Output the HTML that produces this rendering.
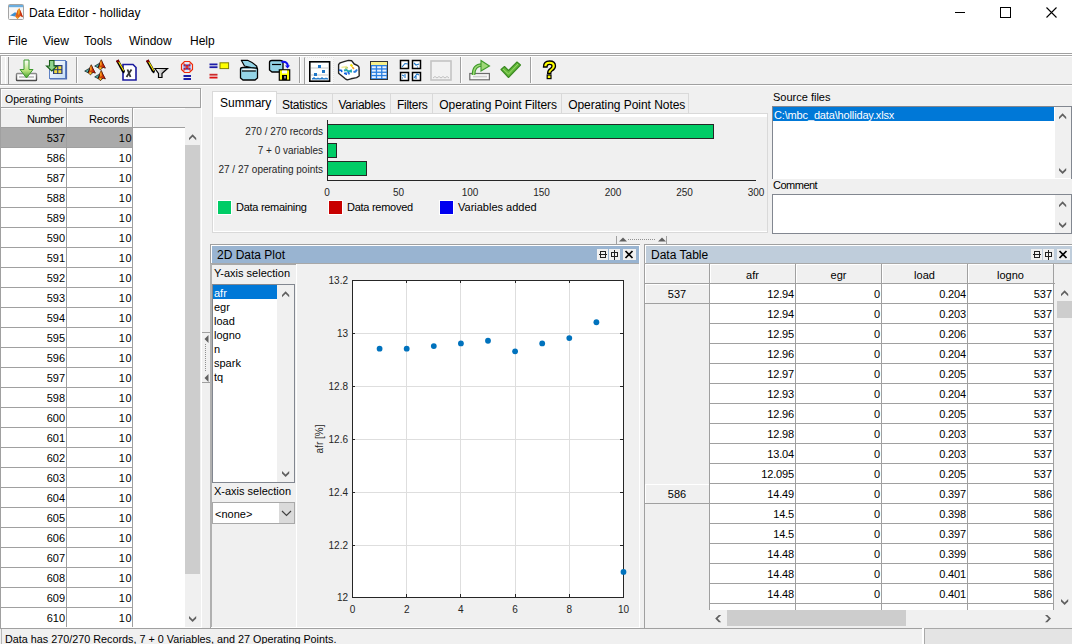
<!DOCTYPE html>
<html><head><meta charset="utf-8">
<style>
*{box-sizing:border-box;margin:0;padding:0}
html,body{width:1072px;height:644px;overflow:hidden;background:#f0f0f0;font-family:"Liberation Sans",sans-serif;color:#000}
.a{position:absolute}
.t{position:absolute;white-space:pre;line-height:1}
svg{position:absolute;overflow:visible}
</style></head><body>
<div class="a" style="left:0px;top:0px;width:1072px;height:53px;background:#fff;"></div>
<svg style="left:8px;top:4px" width="16" height="16" viewBox="0 0 16 16">
<rect x="0.5" y="0.5" width="15" height="15" rx="1" fill="#f6f6f6" stroke="#a4a4a4"/>
<rect x="1" y="1" width="14" height="2.2" fill="#6aaee0"/>
<path d="M2 11.5 L7 8.2 L9 9.2 L7.2 12.5 Z" fill="#3d8fd0"/>
<path d="M7.2 12.5 L9.5 6 L11.3 4.3 L13 8 L15 13.3 L12.6 12 L9.5 15 Z" fill="#e0641a"/>
<path d="M11.3 4.3 L13 8 L15 13.3 L12.6 12 L12 7 Z" fill="#c42a10"/>
<path d="M10.4 5.2 L11.3 4.3 L11.6 9 L10.3 11.2 Z" fill="#f2c22a"/>
<path d="M8 13 L9.5 15 L10.5 13.8 L9 12.5 Z" fill="#f0a020"/>
</svg>
<div class="t" style="left:29px;top:6.8px;font-size:12px;color:#000;">Data Editor - holliday</div>
<div class="a" style="left:955px;top:12px;width:10px;height:1px;background:#000;"></div>
<div class="a" style="left:1000px;top:7px;width:11px;height:11px;border:1px solid #000"></div>
<svg style="left:1046px;top:7px" width="11" height="11" viewBox="0 0 11 11"><path d="M0.5 0.5 L10.5 10.5 M10.5 0.5 L0.5 10.5" stroke="#000" stroke-width="1.1"/></svg>
<div class="t" style="left:8px;top:34.8px;font-size:12px;color:#000;">File</div>
<div class="t" style="left:43px;top:34.8px;font-size:12px;color:#000;">View</div>
<div class="t" style="left:84px;top:34.8px;font-size:12px;color:#000;">Tools</div>
<div class="t" style="left:129px;top:34.8px;font-size:12px;color:#000;">Window</div>
<div class="t" style="left:190px;top:34.8px;font-size:12px;color:#000;">Help</div>
<div class="a" style="left:0px;top:53px;width:1072px;height:1px;background:#a0a0a0;"></div>
<div class="a" style="left:0px;top:54px;width:1072px;height:1px;background:#fff;"></div>
<div class="a" style="left:0px;top:55px;width:1072px;height:1px;background:#a8a8a8;"></div>
<div class="a" style="left:0px;top:56px;width:1072px;height:28px;background:#f0f0f0;"></div>
<div class="a" style="left:1px;top:56px;width:1071px;height:1px;background:#fff;"></div>
<div class="a" style="left:0px;top:55px;width:1px;height:30px;background:#a8a8a8;"></div>
<div class="a" style="left:1px;top:56px;width:1px;height:28px;background:#fff;"></div>
<div class="a" style="left:5px;top:57px;width:1px;height:27px;background:#fff;"></div>
<div class="a" style="left:8px;top:57px;width:1px;height:27px;background:#999;"></div>
<div class="a" style="left:0px;top:84px;width:1072px;height:1px;background:#a0a0a0;"></div>
<div class="a" style="left:0px;top:85px;width:1072px;height:1px;background:#fff;"></div>
<div class="a" style="left:0px;top:86px;width:1072px;height:2px;background:#f0f0f0;"></div>
<div class="a" style="left:76px;top:57px;width:1px;height:26px;background:#a0a0a0;"></div>
<div class="a" style="left:77px;top:57px;width:1px;height:26px;background:#fff;"></div>
<div class="a" style="left:299px;top:57px;width:1px;height:26px;background:#a0a0a0;"></div>
<div class="a" style="left:300px;top:57px;width:1px;height:26px;background:#fff;"></div>
<div class="a" style="left:460px;top:57px;width:1px;height:26px;background:#a0a0a0;"></div>
<div class="a" style="left:461px;top:57px;width:1px;height:26px;background:#fff;"></div>
<div class="a" style="left:530px;top:57px;width:1px;height:26px;background:#a0a0a0;"></div>
<div class="a" style="left:531px;top:57px;width:1px;height:26px;background:#fff;"></div>
<div class="a" style="left:304px;top:57px;width:30px;height:27px;background:#f7f7f7;border-left:1px solid #a0a0a0;border-top:1px dotted #e4e4e4;border-right:1px dotted #e4e4e4"></div>
<svg style="left:0;top:0" width="600" height="90" viewBox="0 0 600 90"><defs>
<linearGradient id="gArrow" x1="0" y1="0" x2="0" y2="1"><stop offset="0" stop-color="#ffffff"/><stop offset="0.6" stop-color="#b7e27a"/><stop offset="1" stop-color="#3f9c2a"/></linearGradient>
<linearGradient id="gTray" x1="0" y1="0" x2="0" y2="1"><stop offset="0" stop-color="#8c8c8c"/><stop offset="1" stop-color="#4a4a4a"/></linearGradient>
<linearGradient id="gBlue" x1="0" y1="0" x2="1" y2="1"><stop offset="0" stop-color="#ffffff"/><stop offset="1" stop-color="#c6def5"/></linearGradient>
<linearGradient id="gFun" x1="0" y1="0" x2="1" y2="0"><stop offset="0" stop-color="#ffffff"/><stop offset="1" stop-color="#9a9a9a"/></linearGradient>
</defs><rect x="16.5" y="73.5" width="20" height="7" rx="0.8" fill="#fdfdfd" stroke="url(#gTray)" stroke-width="1.4"/><rect x="19" y="76" width="15" height="2" fill="#c8c8c8"/><path d="M24 60 H29 V69.5 H33 L26.5 78 L20 69.5 H24 Z" fill="url(#gArrow)" stroke="#3d9a2d" stroke-width="1"/><rect x="49.5" y="60.5" width="16" height="18" fill="url(#gBlue)" stroke="#5f82c4" stroke-width="1"/><path d="M50 79 H66.5 V61" fill="none" stroke="#4a6ab0" stroke-width="1.2"/><rect x="53" y="65" width="9.5" height="9" fill="#24397a"/><rect x="54.2" y="66.2" width="3" height="3" fill="#f3dc3c"/><rect x="58.3" y="66.2" width="3" height="3" fill="#f3dc3c"/><rect x="54.2" y="70.2" width="3" height="3" fill="#f3dc3c"/><rect x="58.3" y="70.2" width="3" height="3" fill="#f3dc3c"/><path d="M49.5 60.5 H54 V66 H57 L51.8 71 L46.5 66 H49.5 Z" fill="#8fd38f" stroke="#195e19" stroke-width="1.1"/><g transform="translate(84.5,64.5) scale(1.0)">
<path d="M0.2 6.6 L4.2 4.2 L5.6 5.2 L3.6 8.2 Z" fill="#4fb0ac" stroke="#1d2f2f" stroke-width="0.8"/>
<path d="M3.6 8.2 L5.4 3 L6.8 0.3 L8.2 3.6 L10.8 8.6 L8.6 7.8 L6 10.2 Z" fill="#c8420a" stroke="#1e0a04" stroke-width="0.9"/>
<path d="M6.8 0.3 L8.2 3.6 L10.8 8.6 L8.6 7.8 L7.8 3.5 Z" fill="#b81808"/>
<path d="M6.2 1.2 L6.8 0.6 L7.2 5 L6.2 7 L5.4 4 Z" fill="#ff9a18"/>
<path d="M4 8.4 L6 10 L7.4 8.6 L5.8 7.6 Z" fill="#f4c21a"/>
</g><g transform="translate(94.5,59.5) scale(1.0)">
<path d="M0.2 6.6 L4.2 4.2 L5.6 5.2 L3.6 8.2 Z" fill="#4fb0ac" stroke="#1d2f2f" stroke-width="0.8"/>
<path d="M3.6 8.2 L5.4 3 L6.8 0.3 L8.2 3.6 L10.8 8.6 L8.6 7.8 L6 10.2 Z" fill="#c8420a" stroke="#1e0a04" stroke-width="0.9"/>
<path d="M6.8 0.3 L8.2 3.6 L10.8 8.6 L8.6 7.8 L7.8 3.5 Z" fill="#b81808"/>
<path d="M6.2 1.2 L6.8 0.6 L7.2 5 L6.2 7 L5.4 4 Z" fill="#ff9a18"/>
<path d="M4 8.4 L6 10 L7.4 8.6 L5.8 7.6 Z" fill="#f4c21a"/>
</g><g transform="translate(94.5,70.3) scale(1.0)">
<path d="M0.2 6.6 L4.2 4.2 L5.6 5.2 L3.6 8.2 Z" fill="#4fb0ac" stroke="#1d2f2f" stroke-width="0.8"/>
<path d="M3.6 8.2 L5.4 3 L6.8 0.3 L8.2 3.6 L10.8 8.6 L8.6 7.8 L6 10.2 Z" fill="#c8420a" stroke="#1e0a04" stroke-width="0.9"/>
<path d="M6.8 0.3 L8.2 3.6 L10.8 8.6 L8.6 7.8 L7.8 3.5 Z" fill="#b81808"/>
<path d="M6.2 1.2 L6.8 0.6 L7.2 5 L6.2 7 L5.4 4 Z" fill="#ff9a18"/>
<path d="M4 8.4 L6 10 L7.4 8.6 L5.8 7.6 Z" fill="#f4c21a"/>
</g><path d="M123 64.5 H133 L136 67.5 V80 H123 Z" fill="#fff" stroke="#1b1b9e" stroke-width="1.6"/><path d="M126.5 77 L131.5 69.5 M127.5 69.5 L130.5 77" stroke="#333" stroke-width="1.8"/><g transform="translate(115.5,59.5)">
<path d="M0.5 1.5 L3 0 L9.5 11.5 L8.5 14 L6.5 12.5 Z" fill="#000"/>
<path d="M2.6 2.6 L7.8 11.6 L8.6 10.8 L3.6 2 Z" fill="#ffee00"/>
<path d="M0.5 1.5 L3 0 L4 2 L1.6 3.3 Z" fill="#8a0000"/>
</g><path d="M155 68.5 H167.5 L162 73.5 V77.5 H158.5 V73.5 Z" fill="url(#gFun)" stroke="#000" stroke-width="1.2"/><g transform="translate(145.5,59.5)">
<path d="M0.5 1.5 L3 0 L9.5 11.5 L8.5 14 L6.5 12.5 Z" fill="#000"/>
<path d="M2.6 2.6 L7.8 11.6 L8.6 10.8 L3.6 2 Z" fill="#ffee00"/>
<path d="M0.5 1.5 L3 0 L4 2 L1.6 3.3 Z" fill="#8a0000"/>
</g><path d="M184.5 61.5 H189.5 L192.5 64.5 V69.5 L189.5 72.5 H184.5 L181.5 69.5 V64.5 Z" fill="#e9e9f2" stroke="#ee2a0a" stroke-width="1.2"/><rect x="183.5" y="64.5" width="7" height="2" fill="#2a2ab8"/><rect x="183.5" y="67.6" width="7" height="2" fill="#2a2ab8"/><path d="M183.5 63.5 L190.5 70.5 M190.5 63.5 L183.5 70.5" stroke="#e83020" stroke-width="1.1"/><rect x="183.5" y="75" width="7.5" height="2" fill="#1d1da8"/><rect x="183.5" y="78" width="7.5" height="2" fill="#1d1da8"/><rect x="209.5" y="63.5" width="8" height="1.8" fill="#1d1da8"/><rect x="209.5" y="66.3" width="8" height="1.8" fill="#1d1da8"/><rect x="220" y="62.8" width="8.6" height="5.8" fill="#ffff00" stroke="#808000" stroke-width="1"/><rect x="209.5" y="73.8" width="8" height="1.8" fill="#cc2a2a"/><rect x="209.5" y="76.7" width="8" height="1.8" fill="#dd1010"/><path d="M240.5 69 Q240.5 67.5 243 67.5 H255 Q257.5 67.5 257.5 69 V78 L255 80 H243 L240.5 78 Z" fill="#94d4e6" stroke="#000" stroke-width="1.3"/><path d="M242.5 68.8 H255.5 V70.4 H242.5 Z" fill="#f4f4f4"/><path d="M242 71 H256" stroke="#000" stroke-width="1.2"/><path d="M241.3 60.3 H247.5 Q252 62 256.8 66.2 V68.2 L251 67.5 L244.5 66 Z" fill="#94d4e6" stroke="#000" stroke-width="1.2" stroke-linejoin="round"/><path d="M269.5 62.5 Q269.5 60.5 272 60.5 H280 Q283 60.5 283 62.5 V70 L280.5 72 H272 L269.5 70 Z" fill="#94d4e6" stroke="#000" stroke-width="1.3"/><path d="M272 64.5 H281" stroke="#000" stroke-width="1.2"/><path d="M281.5 62 Q287 61 288 66" fill="none" stroke="#1010f0" stroke-width="2"/><path d="M285 65.5 L290 65.5 L287.5 68.5 Z" fill="#1010f0"/><rect x="279.3" y="69.8" width="10.4" height="10.4" fill="#ffff00" stroke="#000" stroke-width="1.2"/><rect x="282" y="70.5" width="5" height="3" fill="#fff"/><rect x="282" y="75" width="5" height="5" fill="#000"/><rect x="284.5" y="76" width="1" height="2.5" fill="#fff"/><rect x="309.8" y="61.8" width="19.8" height="19.4" fill="#fff" stroke="#000" stroke-width="1.6"/><rect x="311" y="67.5" width="17.5" height="1" fill="#c8c8c8"/><rect x="311" y="74.5" width="17.5" height="1" fill="#c8c8c8"/><rect x="318" y="65" width="3" height="3" fill="#1f77c8"/><rect x="322" y="70" width="3" height="3" fill="#1f77c8"/><rect x="314" y="73" width="3" height="3" fill="#1f77c8"/><path d="M312 79 L314 77.5 L316 79 L318 78 L320 79 L322 77.5 L324 79 L326 78 L328 79 Z" fill="#1f77c8" stroke="#1f77c8" stroke-width="0.8"/><path d="M338.6 64.5 L340.2 62.8 L344 61.6 L348.5 60.4 L351.8 60.8 L354.2 64 L357.8 65.6 L359 67.2 L359.2 76 L356.6 77.6 L351 78.8 L347.3 79.9 L345.3 78.8 L342 76 L338.6 73.2 Z" fill="#fff" stroke="#222" stroke-width="1.4" stroke-linejoin="bevel"/><path d="M341.5 67.5 L347 66.5" stroke="#f0ec9a" stroke-width="1.6"/><path d="M350.5 64.5 L352.5 66.5" stroke="#f5e000" stroke-width="2"/><path d="M352.3 67.2 L354 68.8" stroke="#f5a020" stroke-width="1.6"/><path d="M345 68.5 L348 67.5" stroke="#b8d070" stroke-width="1.4"/><path d="M339 70 L341.5 70.5 L341.8 72.2" fill="none" stroke="#1060e0" stroke-width="1.6"/><path d="M344 70.5 L346.5 70 L348.5 71.5 L351 70.5 L351.2 72.5" fill="none" stroke="#20a8b0" stroke-width="1.8"/><path d="M353.5 72 L355.5 71.5 L357 69.5" fill="none" stroke="#2f7fe0" stroke-width="2"/><path d="M344 73.5 L346 73.2 L346.3 75 M347.5 72.5 L349 73 L349 74.5" fill="none" stroke="#1060e0" stroke-width="1.5"/><rect x="370.5" y="61.5" width="17" height="18" fill="#2a7fe0" stroke="#333" stroke-width="1"/><rect x="371" y="62" width="16" height="3" fill="#f8f08a"/><rect x="371.8" y="66.3" width="4" height="2" fill="#e8f2ff"/><rect x="377.1" y="66.3" width="4" height="2" fill="#e8f2ff"/><rect x="382.40000000000003" y="66.3" width="4" height="2" fill="#e8f2ff"/><rect x="371.8" y="69.6" width="4" height="2" fill="#e8f2ff"/><rect x="377.1" y="69.6" width="4" height="2" fill="#e8f2ff"/><rect x="382.40000000000003" y="69.6" width="4" height="2" fill="#e8f2ff"/><rect x="371.8" y="72.89999999999999" width="4" height="2" fill="#e8f2ff"/><rect x="377.1" y="72.89999999999999" width="4" height="2" fill="#e8f2ff"/><rect x="382.40000000000003" y="72.89999999999999" width="4" height="2" fill="#e8f2ff"/><rect x="371.8" y="76.19999999999999" width="4" height="2" fill="#e8f2ff"/><rect x="377.1" y="76.19999999999999" width="4" height="2" fill="#e8f2ff"/><rect x="382.40000000000003" y="76.19999999999999" width="4" height="2" fill="#e8f2ff"/><rect x="400.5" y="60.5" width="8" height="8" fill="#fff" stroke="#000" stroke-width="1.5"/><rect x="412.5" y="60.5" width="8" height="8" fill="#fff" stroke="#000" stroke-width="1.5"/><rect x="400.5" y="72.5" width="8" height="8" fill="#fff" stroke="#000" stroke-width="1.5"/><rect x="412.5" y="72.5" width="8" height="8" fill="#fff" stroke="#000" stroke-width="1.5"/><path d="M402 67 L405 63.5 L408 64" fill="none" stroke="#1f77c8" stroke-width="1.1"/><path d="M414 63 L416 65 L419 64 M417 67 L418 67" fill="none" stroke="#1f77c8" stroke-width="1.1"/><path d="M402 75 L404 76 M405 74 L405 78 M402 78 L403 78" fill="none" stroke="#1f77c8" stroke-width="1.1"/><path d="M414 78 L417 74 L419 75 M416 76 L416 79" fill="none" stroke="#1f77c8" stroke-width="1.1"/><rect x="431" y="61" width="20" height="19" fill="#f2f2f2" stroke="#c4c4c4" stroke-width="1.6"/><path d="M433 78 L435 76.5 L437 78 L439 76.5 L441 78 L443 76.5 L445 78 L447 76.5 L449 78" fill="none" stroke="#b4b4b4" stroke-width="0.8"/><rect x="469.8" y="73.5" width="19.6" height="6.3" fill="#f8f8f8" stroke="#6c6c6c" stroke-width="1.2"/><rect x="473" y="75.8" width="14" height="1.6" fill="#cfcfcf"/><path d="M473.5 75 Q473.5 65 482 65" fill="none" stroke="#3e9a2a" stroke-width="3.6"/><path d="M473.5 75 Q473.5 65 482 65" fill="none" stroke="#9fd878" stroke-width="1.6"/><path d="M481 60.5 L489.5 66 L481 71 Z" fill="#9fd878" stroke="#3e9a2a" stroke-width="1.1"/><path d="M501 69.5 L504.5 66.5 L508.5 70.5 L517 62 L520.5 65 L508.5 77.5 Z" fill="#63b83a" stroke="#3b8a22" stroke-width="1.1" stroke-linejoin="round"/><path d="M503 69 L508.5 74 L518 64" fill="none" stroke="#9ad86a" stroke-width="1"/><path d="M543.5 67 Q543.5 61 549.5 61 Q555.5 61 555.5 66 Q555.5 69 552 71 Q550.8 71.8 550.8 73.5 H547.6 Q547.6 70.2 550.2 68.6 Q552 67.5 552 66 Q552 64.3 549.5 64.3 Q547 64.3 547 67 Z" fill="#ffff00" stroke="#000" stroke-width="1.3"/><rect x="547.2" y="75" width="3.8" height="3.6" fill="#ffff00" stroke="#000" stroke-width="1.2"/></svg>
<div class="a" style="left:0px;top:88px;width:201px;height:1px;background:#a0a0a0;"></div>
<div class="a" style="left:0px;top:88px;width:1px;height:540px;background:#a0a0a0;"></div>
<div class="a" style="left:1px;top:89px;width:199px;height:1px;background:#fff;"></div>
<div class="a" style="left:1px;top:89px;width:1px;height:18px;background:#fff;"></div>
<div class="a" style="left:200px;top:88px;width:1px;height:20px;background:#a0a0a0;"></div>
<div class="a" style="left:1px;top:107px;width:200px;height:1px;background:#a0a0a0;"></div>
<div class="t" style="left:5px;top:94.1px;font-size:10.5px;color:#000;">Operating Points</div>
<div class="a" style="left:1px;top:108px;width:184px;height:1px;background:#fff;"></div>
<div class="a" style="left:66px;top:108px;width:1px;height:20px;background:#a0a0a0;"></div>
<div class="a" style="left:67px;top:109px;width:1px;height:18px;background:#fff;"></div>
<div class="a" style="left:132px;top:108px;width:1px;height:20px;background:#a0a0a0;"></div>
<div class="a" style="left:133px;top:109px;width:1px;height:18px;background:#fff;"></div>
<div class="a" style="left:1px;top:127px;width:184px;height:1px;background:#a0a0a0;"></div>
<div class="t" style="right:1008.6px;top:113.7px;font-size:11px;color:#000;letter-spacing:-0.45px">Number</div>
<div class="t" style="right:943px;top:113.7px;font-size:11px;color:#000;letter-spacing:-0.15px">Records</div>
<div class="a" style="left:1px;top:128px;width:132px;height:499px;background:#fff;"></div>
<div class="a" style="left:133px;top:128px;width:52px;height:499px;background:#fff;"></div>
<div class="a" style="left:1px;top:128px;width:132px;height:19px;background:#aaaaaa;"></div>
<div class="a" style="left:1px;top:147px;width:132px;height:1px;background:#a0a0a0;"></div>
<div class="t" style="right:1007px;top:132.7px;font-size:11px;color:#000;">537</div>
<div class="t" style="right:939.8px;top:132.7px;font-size:11px;color:#000;letter-spacing:0.6px">10</div>
<div class="a" style="left:1px;top:167px;width:132px;height:1px;background:#a0a0a0;"></div>
<div class="t" style="right:1007px;top:152.7px;font-size:11px;color:#000;">586</div>
<div class="t" style="right:939.8px;top:152.7px;font-size:11px;color:#000;letter-spacing:0.6px">10</div>
<div class="a" style="left:1px;top:187px;width:132px;height:1px;background:#a0a0a0;"></div>
<div class="t" style="right:1007px;top:172.7px;font-size:11px;color:#000;">587</div>
<div class="t" style="right:939.8px;top:172.7px;font-size:11px;color:#000;letter-spacing:0.6px">10</div>
<div class="a" style="left:1px;top:207px;width:132px;height:1px;background:#a0a0a0;"></div>
<div class="t" style="right:1007px;top:192.7px;font-size:11px;color:#000;">588</div>
<div class="t" style="right:939.8px;top:192.7px;font-size:11px;color:#000;letter-spacing:0.6px">10</div>
<div class="a" style="left:1px;top:227px;width:132px;height:1px;background:#a0a0a0;"></div>
<div class="t" style="right:1007px;top:212.7px;font-size:11px;color:#000;">589</div>
<div class="t" style="right:939.8px;top:212.7px;font-size:11px;color:#000;letter-spacing:0.6px">10</div>
<div class="a" style="left:1px;top:247px;width:132px;height:1px;background:#a0a0a0;"></div>
<div class="t" style="right:1007px;top:232.7px;font-size:11px;color:#000;">590</div>
<div class="t" style="right:939.8px;top:232.7px;font-size:11px;color:#000;letter-spacing:0.6px">10</div>
<div class="a" style="left:1px;top:267px;width:132px;height:1px;background:#a0a0a0;"></div>
<div class="t" style="right:1007px;top:252.7px;font-size:11px;color:#000;">591</div>
<div class="t" style="right:939.8px;top:252.7px;font-size:11px;color:#000;letter-spacing:0.6px">10</div>
<div class="a" style="left:1px;top:287px;width:132px;height:1px;background:#a0a0a0;"></div>
<div class="t" style="right:1007px;top:272.7px;font-size:11px;color:#000;">592</div>
<div class="t" style="right:939.8px;top:272.7px;font-size:11px;color:#000;letter-spacing:0.6px">10</div>
<div class="a" style="left:1px;top:307px;width:132px;height:1px;background:#a0a0a0;"></div>
<div class="t" style="right:1007px;top:292.7px;font-size:11px;color:#000;">593</div>
<div class="t" style="right:939.8px;top:292.7px;font-size:11px;color:#000;letter-spacing:0.6px">10</div>
<div class="a" style="left:1px;top:327px;width:132px;height:1px;background:#a0a0a0;"></div>
<div class="t" style="right:1007px;top:312.7px;font-size:11px;color:#000;">594</div>
<div class="t" style="right:939.8px;top:312.7px;font-size:11px;color:#000;letter-spacing:0.6px">10</div>
<div class="a" style="left:1px;top:347px;width:132px;height:1px;background:#a0a0a0;"></div>
<div class="t" style="right:1007px;top:332.7px;font-size:11px;color:#000;">595</div>
<div class="t" style="right:939.8px;top:332.7px;font-size:11px;color:#000;letter-spacing:0.6px">10</div>
<div class="a" style="left:1px;top:367px;width:132px;height:1px;background:#a0a0a0;"></div>
<div class="t" style="right:1007px;top:352.7px;font-size:11px;color:#000;">596</div>
<div class="t" style="right:939.8px;top:352.7px;font-size:11px;color:#000;letter-spacing:0.6px">10</div>
<div class="a" style="left:1px;top:387px;width:132px;height:1px;background:#a0a0a0;"></div>
<div class="t" style="right:1007px;top:372.7px;font-size:11px;color:#000;">597</div>
<div class="t" style="right:939.8px;top:372.7px;font-size:11px;color:#000;letter-spacing:0.6px">10</div>
<div class="a" style="left:1px;top:407px;width:132px;height:1px;background:#a0a0a0;"></div>
<div class="t" style="right:1007px;top:392.7px;font-size:11px;color:#000;">598</div>
<div class="t" style="right:939.8px;top:392.7px;font-size:11px;color:#000;letter-spacing:0.6px">10</div>
<div class="a" style="left:1px;top:427px;width:132px;height:1px;background:#a0a0a0;"></div>
<div class="t" style="right:1007px;top:412.7px;font-size:11px;color:#000;">600</div>
<div class="t" style="right:939.8px;top:412.7px;font-size:11px;color:#000;letter-spacing:0.6px">10</div>
<div class="a" style="left:1px;top:447px;width:132px;height:1px;background:#a0a0a0;"></div>
<div class="t" style="right:1007px;top:432.7px;font-size:11px;color:#000;">601</div>
<div class="t" style="right:939.8px;top:432.7px;font-size:11px;color:#000;letter-spacing:0.6px">10</div>
<div class="a" style="left:1px;top:467px;width:132px;height:1px;background:#a0a0a0;"></div>
<div class="t" style="right:1007px;top:452.7px;font-size:11px;color:#000;">602</div>
<div class="t" style="right:939.8px;top:452.7px;font-size:11px;color:#000;letter-spacing:0.6px">10</div>
<div class="a" style="left:1px;top:487px;width:132px;height:1px;background:#a0a0a0;"></div>
<div class="t" style="right:1007px;top:472.7px;font-size:11px;color:#000;">603</div>
<div class="t" style="right:939.8px;top:472.7px;font-size:11px;color:#000;letter-spacing:0.6px">10</div>
<div class="a" style="left:1px;top:507px;width:132px;height:1px;background:#a0a0a0;"></div>
<div class="t" style="right:1007px;top:492.7px;font-size:11px;color:#000;">604</div>
<div class="t" style="right:939.8px;top:492.7px;font-size:11px;color:#000;letter-spacing:0.6px">10</div>
<div class="a" style="left:1px;top:527px;width:132px;height:1px;background:#a0a0a0;"></div>
<div class="t" style="right:1007px;top:512.7px;font-size:11px;color:#000;">605</div>
<div class="t" style="right:939.8px;top:512.7px;font-size:11px;color:#000;letter-spacing:0.6px">10</div>
<div class="a" style="left:1px;top:547px;width:132px;height:1px;background:#a0a0a0;"></div>
<div class="t" style="right:1007px;top:532.7px;font-size:11px;color:#000;">606</div>
<div class="t" style="right:939.8px;top:532.7px;font-size:11px;color:#000;letter-spacing:0.6px">10</div>
<div class="a" style="left:1px;top:567px;width:132px;height:1px;background:#a0a0a0;"></div>
<div class="t" style="right:1007px;top:552.7px;font-size:11px;color:#000;">607</div>
<div class="t" style="right:939.8px;top:552.7px;font-size:11px;color:#000;letter-spacing:0.6px">10</div>
<div class="a" style="left:1px;top:587px;width:132px;height:1px;background:#a0a0a0;"></div>
<div class="t" style="right:1007px;top:572.7px;font-size:11px;color:#000;">608</div>
<div class="t" style="right:939.8px;top:572.7px;font-size:11px;color:#000;letter-spacing:0.6px">10</div>
<div class="a" style="left:1px;top:607px;width:132px;height:1px;background:#a0a0a0;"></div>
<div class="t" style="right:1007px;top:592.7px;font-size:11px;color:#000;">609</div>
<div class="t" style="right:939.8px;top:592.7px;font-size:11px;color:#000;letter-spacing:0.6px">10</div>
<div class="a" style="left:1px;top:627px;width:132px;height:1px;background:#a0a0a0;"></div>
<div class="t" style="right:1007px;top:612.7px;font-size:11px;color:#000;">610</div>
<div class="t" style="right:939.8px;top:612.7px;font-size:11px;color:#000;letter-spacing:0.6px">10</div>
<div class="a" style="left:66px;top:128px;width:1px;height:499px;background:#a0a0a0;"></div>
<div class="a" style="left:132px;top:128px;width:1px;height:499px;background:#a0a0a0;"></div>
<div class="a" style="left:185px;top:128px;width:15px;height:499px;background:#f0f0f0;"></div>
<div class="a" style="left:185px;top:145px;width:15px;height:429px;background:#cdcdcd;"></div>
<svg style="left:188.8px;top:133.7px" width="8" height="7" viewBox="0 0 8 7"><path d="M0 3.9 L3.6 0.3 L7.2 3.9 L7.2 6.3 L3.6 2.7 L0 6.3 Z" fill="#606060"/></svg>
<svg style="left:188.8px;top:615.9px" width="8" height="7" viewBox="0 0 8 7"><path d="M0 0 L3.6 3.6 L7.2 0 L7.2 2.4 L3.6 6 L0 2.4 Z" fill="#606060"/></svg>
<div class="a" style="left:1px;top:627px;width:200px;height:1px;background:#fff;"></div>
<div class="a" style="left:201px;top:89px;width:1px;height:539px;background:#fff;"></div>
<div class="a" style="left:212px;top:113px;width:556px;height:120px;background:#fff;"></div>
<div class="a" style="left:212px;top:113px;width:556px;height:120px;border:1px solid #d9d9d9"></div>
<div class="a" style="left:214px;top:117px;width:553px;height:114px;background:#f0f0f0;"></div>
<div class="a" style="left:276px;top:93px;width:57px;height:20px;background:#f0f0f0;border:1px solid #d9d9d9;border-bottom:none"></div>
<div class="t" style="left:282px;top:98.8px;font-size:12px;color:#000;letter-spacing:-0.27px">Statistics</div>
<div class="a" style="left:332px;top:93px;width:59px;height:20px;background:#f0f0f0;border:1px solid #d9d9d9;border-bottom:none"></div>
<div class="t" style="left:338.5px;top:98.8px;font-size:12px;color:#000;letter-spacing:-0.26px">Variables</div>
<div class="a" style="left:390px;top:93px;width:43px;height:20px;background:#f0f0f0;border:1px solid #d9d9d9;border-bottom:none"></div>
<div class="t" style="left:397px;top:98.8px;font-size:12px;color:#000;letter-spacing:-0.3px">Filters</div>
<div class="a" style="left:432px;top:93px;width:130px;height:20px;background:#f0f0f0;border:1px solid #d9d9d9;border-bottom:none"></div>
<div class="t" style="left:439.3px;top:98.8px;font-size:12px;color:#000;letter-spacing:-0.08px">Operating Point Filters</div>
<div class="a" style="left:561px;top:93px;width:128px;height:20px;background:#f0f0f0;border:1px solid #d9d9d9;border-bottom:none"></div>
<div class="t" style="left:568.2px;top:98.8px;font-size:12px;color:#000;letter-spacing:-0.045px">Operating Point Notes</div>
<div class="a" style="left:212px;top:91px;width:65px;height:23px;background:#fff;border:1px solid #d9d9d9;border-bottom:none"></div>
<div class="a" style="left:213px;top:113px;width:63px;height:4px;background:#fff;"></div>
<div class="t" style="left:220px;top:96.8px;font-size:12px;color:#000;">Summary</div>
<div class="a" style="left:327px;top:120px;width:1px;height:61px;background:#262626;"></div>
<div class="a" style="left:327px;top:180px;width:429px;height:1px;background:#262626;"></div>
<div class="a" style="left:327px;top:124px;width:387px;height:15px;background:#00cc66;border:1px solid #262626"></div>
<div class="a" style="left:327px;top:143px;width:10px;height:15px;background:#00cc66;border:1px solid #262626"></div>
<div class="a" style="left:327px;top:161px;width:40px;height:15px;background:#00cc66;border:1px solid #262626"></div>
<div class="t" style="right:749px;top:126.5px;font-size:10px;color:#262626;">270 / 270 records</div>
<div class="t" style="right:749px;top:145.5px;font-size:10px;color:#262626;">7 + 0 variables</div>
<div class="t" style="right:749px;top:164.5px;font-size:10px;color:#262626;">27 / 27 operating points</div>
<div class="t" style="left:227.0px;width:200px;text-align:center;top:187.5px;font-size:10px;color:#262626;">0</div>
<div class="t" style="left:298.5px;width:200px;text-align:center;top:187.5px;font-size:10px;color:#262626;">50</div>
<div class="t" style="left:370.0px;width:200px;text-align:center;top:187.5px;font-size:10px;color:#262626;">100</div>
<div class="t" style="left:441.5px;width:200px;text-align:center;top:187.5px;font-size:10px;color:#262626;">150</div>
<div class="t" style="left:513.0px;width:200px;text-align:center;top:187.5px;font-size:10px;color:#262626;">200</div>
<div class="t" style="left:584.5px;width:200px;text-align:center;top:187.5px;font-size:10px;color:#262626;">250</div>
<div class="t" style="left:656.0px;width:200px;text-align:center;top:187.5px;font-size:10px;color:#262626;">300</div>
<div class="a" style="left:217px;top:200px;width:15px;height:15px;background:#fff;"></div>
<div class="a" style="left:218px;top:201px;width:13px;height:13px;background:#00cc66;"></div>
<div class="t" style="left:236px;top:201.7px;font-size:11px;color:#000;letter-spacing:-0.28px">Data remaining</div>
<div class="a" style="left:328px;top:200px;width:15px;height:15px;background:#fff;"></div>
<div class="a" style="left:329px;top:201px;width:13px;height:13px;background:#c80000;"></div>
<div class="t" style="left:347px;top:201.7px;font-size:11px;color:#000;letter-spacing:-0.27px">Data removed</div>
<div class="a" style="left:439px;top:200px;width:15px;height:15px;background:#fff;"></div>
<div class="a" style="left:440px;top:201px;width:13px;height:13px;background:#0000f0;"></div>
<div class="t" style="left:458px;top:201.7px;font-size:11px;color:#000;letter-spacing:0px">Variables added</div>
<div class="t" style="left:773px;top:91.7px;font-size:11px;color:#000;">Source files</div>
<div class="a" style="left:772px;top:106px;width:300px;height:73px;background:#fff;border:1px solid #828790;border-bottom:none"></div>
<div class="a" style="left:773px;top:107px;width:281px;height:14px;background:#0078d7;"></div>
<div class="t" style="left:774px;top:109.7px;font-size:11px;color:#fff;letter-spacing:-0.15px">C:\mbc_data\holliday.xlsx</div>
<div class="a" style="left:1055px;top:107px;width:16px;height:71px;background:#f0f0f0;"></div>
<svg style="left:1058.8px;top:113px" width="8" height="7" viewBox="0 0 8 7"><path d="M0 3.9 L3.6 0.3 L7.2 3.9 L7.2 6.3 L3.6 2.7 L0 6.3 Z" fill="#606060"/></svg>
<svg style="left:1058.8px;top:167.6px" width="8" height="7" viewBox="0 0 8 7"><path d="M0 0 L3.6 3.6 L7.2 0 L7.2 2.4 L3.6 6 L0 2.4 Z" fill="#606060"/></svg>
<div class="t" style="left:773px;top:179.7px;font-size:11px;color:#000;letter-spacing:-0.5px">Comment</div>
<div class="a" style="left:772px;top:194px;width:300px;height:40px;background:#fff;border:1px solid #828790"></div>
<div class="a" style="left:1055px;top:195px;width:16px;height:38px;background:#f0f0f0;"></div>
<svg style="left:1058.8px;top:201px" width="8" height="7" viewBox="0 0 8 7"><path d="M0 3.9 L3.6 0.3 L7.2 3.9 L7.2 6.3 L3.6 2.7 L0 6.3 Z" fill="#606060"/></svg>
<svg style="left:1058.8px;top:221.9px" width="8" height="7" viewBox="0 0 8 7"><path d="M0 0 L3.6 3.6 L7.2 0 L7.2 2.4 L3.6 6 L0 2.4 Z" fill="#606060"/></svg>
<div class="a" style="left:616px;top:236px;width:1px;height:9px;background:#a0a0a0;"></div>
<div class="a" style="left:666px;top:236px;width:1px;height:9px;background:#a0a0a0;"></div>
<svg style="left:619px;top:237px" width="8" height="5" viewBox="0 0 8 5"><path d="M0 4.5 L4 0.5 L8 4.5Z" fill="#606060"/></svg>
<svg style="left:658px;top:237px" width="8" height="5" viewBox="0 0 8 5"><path d="M0 4.5 L4 0.5 L8 4.5Z" fill="#606060"/></svg>
<div class="a" style="left:628px;top:239px;width:1px;height:1px;background:#909090;"></div>
<div class="a" style="left:630px;top:239px;width:1px;height:1px;background:#909090;"></div>
<div class="a" style="left:632px;top:239px;width:1px;height:1px;background:#909090;"></div>
<div class="a" style="left:634px;top:239px;width:1px;height:1px;background:#909090;"></div>
<div class="a" style="left:636px;top:239px;width:1px;height:1px;background:#909090;"></div>
<div class="a" style="left:638px;top:239px;width:1px;height:1px;background:#909090;"></div>
<div class="a" style="left:640px;top:239px;width:1px;height:1px;background:#909090;"></div>
<div class="a" style="left:642px;top:239px;width:1px;height:1px;background:#909090;"></div>
<div class="a" style="left:644px;top:239px;width:1px;height:1px;background:#909090;"></div>
<div class="a" style="left:646px;top:239px;width:1px;height:1px;background:#909090;"></div>
<div class="a" style="left:648px;top:239px;width:1px;height:1px;background:#909090;"></div>
<div class="a" style="left:650px;top:239px;width:1px;height:1px;background:#909090;"></div>
<div class="a" style="left:652px;top:239px;width:1px;height:1px;background:#909090;"></div>
<div class="a" style="left:654px;top:239px;width:1px;height:1px;background:#909090;"></div>
<svg style="left:203.5px;top:335px" width="5" height="8" viewBox="0 0 5 8"><path d="M4.5 0 L0.5 4 L4.5 8Z" fill="#606060"/></svg>
<svg style="left:203.5px;top:374px" width="5" height="8" viewBox="0 0 5 8"><path d="M4.5 0 L0.5 4 L4.5 8Z" fill="#606060"/></svg>
<div class="a" style="left:205px;top:344px;width:1px;height:1px;background:#909090;"></div>
<div class="a" style="left:205px;top:346px;width:1px;height:1px;background:#909090;"></div>
<div class="a" style="left:205px;top:348px;width:1px;height:1px;background:#909090;"></div>
<div class="a" style="left:205px;top:350px;width:1px;height:1px;background:#909090;"></div>
<div class="a" style="left:205px;top:352px;width:1px;height:1px;background:#909090;"></div>
<div class="a" style="left:205px;top:354px;width:1px;height:1px;background:#909090;"></div>
<div class="a" style="left:205px;top:356px;width:1px;height:1px;background:#909090;"></div>
<div class="a" style="left:205px;top:358px;width:1px;height:1px;background:#909090;"></div>
<div class="a" style="left:205px;top:360px;width:1px;height:1px;background:#909090;"></div>
<div class="a" style="left:205px;top:362px;width:1px;height:1px;background:#909090;"></div>
<div class="a" style="left:205px;top:364px;width:1px;height:1px;background:#909090;"></div>
<div class="a" style="left:205px;top:366px;width:1px;height:1px;background:#909090;"></div>
<div class="a" style="left:205px;top:368px;width:1px;height:1px;background:#909090;"></div>
<div class="a" style="left:205px;top:370px;width:1px;height:1px;background:#909090;"></div>
<div class="a" style="left:202px;top:332px;width:8px;height:1px;background:#a0a0a0;"></div>
<div class="a" style="left:202px;top:382px;width:8px;height:1px;background:#a0a0a0;"></div>
<div class="a" style="left:210px;top:244px;width:430px;height:1px;background:#a0a0a0;"></div>
<div class="a" style="left:210px;top:244px;width:1px;height:384px;background:#a0a0a0;"></div>
<div class="a" style="left:211px;top:245px;width:428px;height:1px;background:#fff;"></div>
<div class="a" style="left:211px;top:245px;width:1px;height:18px;background:#fff;"></div>
<div class="a" style="left:639px;top:245px;width:1px;height:383px;background:#fff;"></div>
<div class="a" style="left:211px;top:627px;width:429px;height:1px;background:#fff;"></div>
<div class="a" style="left:212px;top:246px;width:427px;height:17px;background:#99b4d1;"></div>
<div class="t" style="left:217px;top:248.8px;font-size:12px;color:#000;">2D Data Plot</div>
<div class="a" style="left:597px;top:249px;width:11px;height:11px;background:#f0f0f0"></div>
<div class="a" style="left:609px;top:249px;width:11px;height:11px;background:#f0f0f0"></div>
<div class="a" style="left:623px;top:249px;width:13px;height:11px;background:#f0f0f0"></div>
<svg style="left:597px;top:249px" width="11" height="11" viewBox="0 0 11 11" shape-rendering="crispEdges"><path d="M3 2h6v1h-6z M3 8h6v1h-6z M3 2h1v7h-1z M8 2h1v7h-1z M2 5h8v1h-8z" fill="#222"/></svg>
<svg style="left:609px;top:249px" width="11" height="11" viewBox="0 0 11 11" shape-rendering="crispEdges"><path d="M2 3h7v1h-7z M2 7h7v1h-7z M2 3h1v5h-1z M8 3h1v5h-1z M5 1h1v10h-1z" fill="#222"/></svg>
<svg style="left:623px;top:249px" width="13" height="11" viewBox="0 0 13 11"><path d="M2.5 2 L9.5 9 M9.5 2 L2.5 9" fill="none" stroke="#000" stroke-width="1.7"/></svg>
<div class="a" style="left:210px;top:263px;width:86px;height:2px;background:#a8a8a8;"></div>
<div class="a" style="left:296px;top:263px;width:343px;height:1px;background:#a8a8a8;"></div>
<div class="a" style="left:210px;top:264px;width:2px;height:363px;background:#b0b0b0;"></div>
<div class="a" style="left:296px;top:264px;width:1px;height:363px;background:#fff;"></div>
<div class="a" style="left:213px;top:266px;width:81px;height:17px;background:#f0f0f0;"></div>
<div class="t" style="left:214px;top:267.7px;font-size:11px;color:#000;">Y-axis selection</div>
<div class="a" style="left:212px;top:284px;width:83px;height:199px;background:#fff;border:1px solid #828790"></div>
<div class="a" style="left:213px;top:285px;width:64px;height:14px;background:#0078d7;"></div>
<div class="t" style="left:214px;top:287.7px;font-size:11px;color:#fff;">afr</div>
<div class="t" style="left:214px;top:301.7px;font-size:11px;color:#000;">egr</div>
<div class="t" style="left:214px;top:315.7px;font-size:11px;color:#000;">load</div>
<div class="t" style="left:214px;top:329.7px;font-size:11px;color:#000;">logno</div>
<div class="t" style="left:214px;top:343.7px;font-size:11px;color:#000;">n</div>
<div class="t" style="left:214px;top:357.7px;font-size:11px;color:#000;">spark</div>
<div class="t" style="left:214px;top:371.7px;font-size:11px;color:#000;">tq</div>
<div class="a" style="left:277px;top:285px;width:17px;height:197px;background:#f0f0f0;"></div>
<svg style="left:281.6px;top:291.2px" width="8" height="7" viewBox="0 0 8 7"><path d="M0 3.9 L3.6 0.3 L7.2 3.9 L7.2 6.3 L3.6 2.7 L0 6.3 Z" fill="#606060"/></svg>
<svg style="left:281.6px;top:470.7px" width="8" height="7" viewBox="0 0 8 7"><path d="M0 0 L3.6 3.6 L7.2 0 L7.2 2.4 L3.6 6 L0 2.4 Z" fill="#606060"/></svg>
<div class="t" style="left:214px;top:485.7px;font-size:11px;color:#000;">X-axis selection</div>
<div class="a" style="left:212px;top:502px;width:83px;height:22px;background:#fff;border:1px solid #a8a8a8"></div>
<div class="a" style="left:279px;top:503px;width:15px;height:20px;background:#dadada;"></div>
<svg style="left:281px;top:510px" width="11" height="7" viewBox="0 0 11 7"><path d="M1 1 L5.5 5.5 L10 1" fill="none" stroke="#404040" stroke-width="1.2"/></svg>
<div class="t" style="left:215px;top:508.7px;font-size:11px;color:#000;">&lt;none&gt;</div>
<svg style="left:0;top:0" width="1072" height="644" viewBox="0 0 1072 644" shape-rendering="crispEdges"><rect x="352" y="280" width="271" height="317" fill="#fff"/><rect x="406" y="280" width="1" height="317" fill="#dedede"/><rect x="460" y="280" width="1" height="317" fill="#dedede"/><rect x="515" y="280" width="1" height="317" fill="#dedede"/><rect x="569" y="280" width="1" height="317" fill="#dedede"/><rect x="352" y="545" width="271" height="1" fill="#dedede"/><rect x="352" y="492" width="271" height="1" fill="#dedede"/><rect x="352" y="439" width="271" height="1" fill="#dedede"/><rect x="352" y="386" width="271" height="1" fill="#dedede"/><rect x="352" y="333" width="271" height="1" fill="#dedede"/><rect x="352" y="594" width="1" height="3" fill="#262626"/><rect x="352" y="280" width="1" height="3" fill="#262626"/><rect x="406" y="594" width="1" height="3" fill="#262626"/><rect x="406" y="280" width="1" height="3" fill="#262626"/><rect x="460" y="594" width="1" height="3" fill="#262626"/><rect x="460" y="280" width="1" height="3" fill="#262626"/><rect x="515" y="594" width="1" height="3" fill="#262626"/><rect x="515" y="280" width="1" height="3" fill="#262626"/><rect x="569" y="594" width="1" height="3" fill="#262626"/><rect x="569" y="280" width="1" height="3" fill="#262626"/><rect x="623" y="594" width="1" height="3" fill="#262626"/><rect x="623" y="280" width="1" height="3" fill="#262626"/><rect x="352" y="597" width="3" height="1" fill="#262626"/><rect x="620" y="597" width="3" height="1" fill="#262626"/><rect x="352" y="545" width="3" height="1" fill="#262626"/><rect x="620" y="545" width="3" height="1" fill="#262626"/><rect x="352" y="492" width="3" height="1" fill="#262626"/><rect x="620" y="492" width="3" height="1" fill="#262626"/><rect x="352" y="439" width="3" height="1" fill="#262626"/><rect x="620" y="439" width="3" height="1" fill="#262626"/><rect x="352" y="386" width="3" height="1" fill="#262626"/><rect x="620" y="386" width="3" height="1" fill="#262626"/><rect x="352" y="333" width="3" height="1" fill="#262626"/><rect x="620" y="333" width="3" height="1" fill="#262626"/><rect x="352" y="280" width="3" height="1" fill="#262626"/><rect x="620" y="280" width="3" height="1" fill="#262626"/><rect x="352" y="280" width="272" height="1" fill="#262626"/><rect x="352" y="597" width="272" height="1" fill="#262626"/><rect x="352" y="280" width="1" height="318" fill="#262626"/><rect x="623" y="280" width="1" height="318" fill="#262626"/></svg>
<svg style="left:0;top:0" width="1072" height="644" viewBox="0 0 1072 644"><circle cx="379.6" cy="348.68333333333345" r="2.9" fill="#0072bd"/><circle cx="406.7" cy="348.68333333333345" r="2.9" fill="#0072bd"/><circle cx="433.8" cy="346.04166666666686" r="2.9" fill="#0072bd"/><circle cx="460.9" cy="343.39999999999975" r="2.9" fill="#0072bd"/><circle cx="488.0" cy="340.75833333333316" r="2.9" fill="#0072bd"/><circle cx="515.1" cy="351.32500000000005" r="2.9" fill="#0072bd"/><circle cx="542.2" cy="343.39999999999975" r="2.9" fill="#0072bd"/><circle cx="569.3" cy="338.11666666666656" r="2.9" fill="#0072bd"/><circle cx="596.4" cy="322.2666666666669" r="2.9" fill="#0072bd"/><circle cx="623.5" cy="571.9041666666665" r="2.9" fill="#0072bd"/></svg>
<div class="t" style="right:724px;top:592.5px;font-size:10px;color:#262626;">12</div>
<div class="t" style="right:724px;top:540.5px;font-size:10px;color:#262626;">12.2</div>
<div class="t" style="right:724px;top:487.5px;font-size:10px;color:#262626;">12.4</div>
<div class="t" style="right:724px;top:434.5px;font-size:10px;color:#262626;">12.6</div>
<div class="t" style="right:724px;top:381.5px;font-size:10px;color:#262626;">12.8</div>
<div class="t" style="right:724px;top:328.5px;font-size:10px;color:#262626;">13</div>
<div class="t" style="right:724px;top:275.5px;font-size:10px;color:#262626;">13.2</div>
<div class="t" style="left:252.5px;width:200px;text-align:center;top:604.5px;font-size:10px;color:#262626;">0</div>
<div class="t" style="left:306.7px;width:200px;text-align:center;top:604.5px;font-size:10px;color:#262626;">2</div>
<div class="t" style="left:360.9px;width:200px;text-align:center;top:604.5px;font-size:10px;color:#262626;">4</div>
<div class="t" style="left:415.1px;width:200px;text-align:center;top:604.5px;font-size:10px;color:#262626;">6</div>
<div class="t" style="left:469.29999999999995px;width:200px;text-align:center;top:604.5px;font-size:10px;color:#262626;">8</div>
<div class="t" style="left:523.5px;width:200px;text-align:center;top:604.5px;font-size:10px;color:#262626;">10</div>
<div class="t" style="left:319.5px;top:439px;font-size:10px;color:#262626;transform:translate(-50%,-50%) rotate(-90deg)">afr [%]</div>
<div class="a" style="left:644px;top:244px;width:428px;height:1px;background:#a0a0a0;"></div>
<div class="a" style="left:644px;top:244px;width:1px;height:384px;background:#a0a0a0;"></div>
<div class="a" style="left:645px;top:245px;width:427px;height:1px;background:#fff;"></div>
<div class="a" style="left:645px;top:245px;width:1px;height:18px;background:#fff;"></div>
<div class="a" style="left:646px;top:246px;width:426px;height:17px;background:#bfcddb;"></div>
<div class="t" style="left:651px;top:248.8px;font-size:12px;color:#000;">Data Table</div>
<div class="a" style="left:1031px;top:249px;width:11px;height:11px;background:#f0f0f0"></div>
<div class="a" style="left:1043px;top:249px;width:11px;height:11px;background:#f0f0f0"></div>
<div class="a" style="left:1057px;top:249px;width:13px;height:11px;background:#f0f0f0"></div>
<svg style="left:1031px;top:249px" width="11" height="11" viewBox="0 0 11 11" shape-rendering="crispEdges"><path d="M3 2h6v1h-6z M3 8h6v1h-6z M3 2h1v7h-1z M8 2h1v7h-1z M2 5h8v1h-8z" fill="#222"/></svg>
<svg style="left:1043px;top:249px" width="11" height="11" viewBox="0 0 11 11" shape-rendering="crispEdges"><path d="M2 3h7v1h-7z M2 7h7v1h-7z M2 3h1v5h-1z M8 3h1v5h-1z M5 1h1v10h-1z" fill="#222"/></svg>
<svg style="left:1057px;top:249px" width="13" height="11" viewBox="0 0 13 11"><path d="M2.5 2 L9.5 9 M9.5 2 L2.5 9" fill="none" stroke="#000" stroke-width="1.7"/></svg>
<div class="a" style="left:644px;top:263px;width:428px;height:1px;background:#a8a8a8;"></div>
<div class="a" style="left:645px;top:264px;width:410px;height:1px;background:#fff;"></div>
<div class="a" style="left:645px;top:264px;width:1px;height:20px;background:#fff;"></div>
<div class="a" style="left:645px;top:283px;width:410px;height:1px;background:#a0a0a0;"></div>
<div class="a" style="left:710px;top:284px;width:343px;height:326px;background:#fff;"></div>
<div class="a" style="left:709px;top:264px;width:1px;height:346px;background:#a0a0a0;"></div>
<div class="a" style="left:795px;top:264px;width:1px;height:346px;background:#a0a0a0;"></div>
<div class="a" style="left:881px;top:264px;width:1px;height:346px;background:#a0a0a0;"></div>
<div class="a" style="left:967px;top:264px;width:1px;height:346px;background:#a0a0a0;"></div>
<div class="a" style="left:1053px;top:264px;width:1px;height:346px;background:#a0a0a0;"></div>
<div class="a" style="left:710px;top:265px;width:1px;height:18px;background:#fff;"></div>
<div class="a" style="left:796px;top:265px;width:1px;height:18px;background:#fff;"></div>
<div class="a" style="left:882px;top:265px;width:1px;height:18px;background:#fff;"></div>
<div class="a" style="left:968px;top:265px;width:1px;height:18px;background:#fff;"></div>
<div class="t" style="left:652.5px;width:200px;text-align:center;top:269.7px;font-size:11px;color:#000;">afr</div>
<div class="t" style="left:738.5px;width:200px;text-align:center;top:269.7px;font-size:11px;color:#000;">egr</div>
<div class="t" style="left:824.5px;width:200px;text-align:center;top:269.7px;font-size:11px;color:#000;">load</div>
<div class="t" style="left:910.5px;width:200px;text-align:center;top:269.7px;font-size:11px;color:#000;">logno</div>
<div class="a" style="left:710px;top:303px;width:343px;height:1px;background:#a0a0a0;"></div>
<div class="t" style="right:278px;top:288.7px;font-size:11px;color:#000;letter-spacing:-0.15px">12.94</div>
<div class="t" style="right:192px;top:288.7px;font-size:11px;color:#000;">0</div>
<div class="t" style="right:106px;top:288.7px;font-size:11px;color:#000;letter-spacing:-0.15px">0.204</div>
<div class="t" style="right:20px;top:288.7px;font-size:11px;color:#000;">537</div>
<div class="a" style="left:710px;top:323px;width:343px;height:1px;background:#a0a0a0;"></div>
<div class="t" style="right:278px;top:308.7px;font-size:11px;color:#000;letter-spacing:-0.15px">12.94</div>
<div class="t" style="right:192px;top:308.7px;font-size:11px;color:#000;">0</div>
<div class="t" style="right:106px;top:308.7px;font-size:11px;color:#000;letter-spacing:-0.15px">0.203</div>
<div class="t" style="right:20px;top:308.7px;font-size:11px;color:#000;">537</div>
<div class="a" style="left:710px;top:343px;width:343px;height:1px;background:#a0a0a0;"></div>
<div class="t" style="right:278px;top:328.7px;font-size:11px;color:#000;letter-spacing:-0.15px">12.95</div>
<div class="t" style="right:192px;top:328.7px;font-size:11px;color:#000;">0</div>
<div class="t" style="right:106px;top:328.7px;font-size:11px;color:#000;letter-spacing:-0.15px">0.206</div>
<div class="t" style="right:20px;top:328.7px;font-size:11px;color:#000;">537</div>
<div class="a" style="left:710px;top:363px;width:343px;height:1px;background:#a0a0a0;"></div>
<div class="t" style="right:278px;top:348.7px;font-size:11px;color:#000;letter-spacing:-0.15px">12.96</div>
<div class="t" style="right:192px;top:348.7px;font-size:11px;color:#000;">0</div>
<div class="t" style="right:106px;top:348.7px;font-size:11px;color:#000;letter-spacing:-0.15px">0.204</div>
<div class="t" style="right:20px;top:348.7px;font-size:11px;color:#000;">537</div>
<div class="a" style="left:710px;top:383px;width:343px;height:1px;background:#a0a0a0;"></div>
<div class="t" style="right:278px;top:368.7px;font-size:11px;color:#000;letter-spacing:-0.15px">12.97</div>
<div class="t" style="right:192px;top:368.7px;font-size:11px;color:#000;">0</div>
<div class="t" style="right:106px;top:368.7px;font-size:11px;color:#000;letter-spacing:-0.15px">0.205</div>
<div class="t" style="right:20px;top:368.7px;font-size:11px;color:#000;">537</div>
<div class="a" style="left:710px;top:403px;width:343px;height:1px;background:#a0a0a0;"></div>
<div class="t" style="right:278px;top:388.7px;font-size:11px;color:#000;letter-spacing:-0.15px">12.93</div>
<div class="t" style="right:192px;top:388.7px;font-size:11px;color:#000;">0</div>
<div class="t" style="right:106px;top:388.7px;font-size:11px;color:#000;letter-spacing:-0.15px">0.204</div>
<div class="t" style="right:20px;top:388.7px;font-size:11px;color:#000;">537</div>
<div class="a" style="left:710px;top:423px;width:343px;height:1px;background:#a0a0a0;"></div>
<div class="t" style="right:278px;top:408.7px;font-size:11px;color:#000;letter-spacing:-0.15px">12.96</div>
<div class="t" style="right:192px;top:408.7px;font-size:11px;color:#000;">0</div>
<div class="t" style="right:106px;top:408.7px;font-size:11px;color:#000;letter-spacing:-0.15px">0.205</div>
<div class="t" style="right:20px;top:408.7px;font-size:11px;color:#000;">537</div>
<div class="a" style="left:710px;top:443px;width:343px;height:1px;background:#a0a0a0;"></div>
<div class="t" style="right:278px;top:428.7px;font-size:11px;color:#000;letter-spacing:-0.15px">12.98</div>
<div class="t" style="right:192px;top:428.7px;font-size:11px;color:#000;">0</div>
<div class="t" style="right:106px;top:428.7px;font-size:11px;color:#000;letter-spacing:-0.15px">0.203</div>
<div class="t" style="right:20px;top:428.7px;font-size:11px;color:#000;">537</div>
<div class="a" style="left:710px;top:463px;width:343px;height:1px;background:#a0a0a0;"></div>
<div class="t" style="right:278px;top:448.7px;font-size:11px;color:#000;letter-spacing:-0.15px">13.04</div>
<div class="t" style="right:192px;top:448.7px;font-size:11px;color:#000;">0</div>
<div class="t" style="right:106px;top:448.7px;font-size:11px;color:#000;letter-spacing:-0.15px">0.203</div>
<div class="t" style="right:20px;top:448.7px;font-size:11px;color:#000;">537</div>
<div class="a" style="left:710px;top:483px;width:343px;height:1px;background:#a0a0a0;"></div>
<div class="t" style="right:278px;top:468.7px;font-size:11px;color:#000;letter-spacing:-0.15px">12.095</div>
<div class="t" style="right:192px;top:468.7px;font-size:11px;color:#000;">0</div>
<div class="t" style="right:106px;top:468.7px;font-size:11px;color:#000;letter-spacing:-0.15px">0.205</div>
<div class="t" style="right:20px;top:468.7px;font-size:11px;color:#000;">537</div>
<div class="a" style="left:710px;top:503px;width:343px;height:1px;background:#a0a0a0;"></div>
<div class="t" style="right:278px;top:488.7px;font-size:11px;color:#000;letter-spacing:-0.15px">14.49</div>
<div class="t" style="right:192px;top:488.7px;font-size:11px;color:#000;">0</div>
<div class="t" style="right:106px;top:488.7px;font-size:11px;color:#000;letter-spacing:-0.15px">0.397</div>
<div class="t" style="right:20px;top:488.7px;font-size:11px;color:#000;">586</div>
<div class="a" style="left:710px;top:523px;width:343px;height:1px;background:#a0a0a0;"></div>
<div class="t" style="right:278px;top:508.7px;font-size:11px;color:#000;letter-spacing:-0.15px">14.5</div>
<div class="t" style="right:192px;top:508.7px;font-size:11px;color:#000;">0</div>
<div class="t" style="right:106px;top:508.7px;font-size:11px;color:#000;letter-spacing:-0.15px">0.398</div>
<div class="t" style="right:20px;top:508.7px;font-size:11px;color:#000;">586</div>
<div class="a" style="left:710px;top:543px;width:343px;height:1px;background:#a0a0a0;"></div>
<div class="t" style="right:278px;top:528.7px;font-size:11px;color:#000;letter-spacing:-0.15px">14.5</div>
<div class="t" style="right:192px;top:528.7px;font-size:11px;color:#000;">0</div>
<div class="t" style="right:106px;top:528.7px;font-size:11px;color:#000;letter-spacing:-0.15px">0.397</div>
<div class="t" style="right:20px;top:528.7px;font-size:11px;color:#000;">586</div>
<div class="a" style="left:710px;top:563px;width:343px;height:1px;background:#a0a0a0;"></div>
<div class="t" style="right:278px;top:548.7px;font-size:11px;color:#000;letter-spacing:-0.15px">14.48</div>
<div class="t" style="right:192px;top:548.7px;font-size:11px;color:#000;">0</div>
<div class="t" style="right:106px;top:548.7px;font-size:11px;color:#000;letter-spacing:-0.15px">0.399</div>
<div class="t" style="right:20px;top:548.7px;font-size:11px;color:#000;">586</div>
<div class="a" style="left:710px;top:583px;width:343px;height:1px;background:#a0a0a0;"></div>
<div class="t" style="right:278px;top:568.7px;font-size:11px;color:#000;letter-spacing:-0.15px">14.48</div>
<div class="t" style="right:192px;top:568.7px;font-size:11px;color:#000;">0</div>
<div class="t" style="right:106px;top:568.7px;font-size:11px;color:#000;letter-spacing:-0.15px">0.401</div>
<div class="t" style="right:20px;top:568.7px;font-size:11px;color:#000;">586</div>
<div class="a" style="left:710px;top:603px;width:343px;height:1px;background:#a0a0a0;"></div>
<div class="t" style="right:278px;top:588.7px;font-size:11px;color:#000;letter-spacing:-0.15px">14.48</div>
<div class="t" style="right:192px;top:588.7px;font-size:11px;color:#000;">0</div>
<div class="t" style="right:106px;top:588.7px;font-size:11px;color:#000;letter-spacing:-0.15px">0.401</div>
<div class="t" style="right:20px;top:588.7px;font-size:11px;color:#000;">586</div>
<div class="a" style="left:710px;top:623px;width:343px;height:1px;background:#a0a0a0;"></div>
<div class="a" style="left:645px;top:284px;width:64px;height:1px;background:#fff;"></div>
<div class="a" style="left:645px;top:284px;width:1px;height:19px;background:#fff;"></div>
<div class="a" style="left:645px;top:303px;width:64px;height:1px;background:#a0a0a0;"></div>
<div class="t" style="left:577px;width:200px;text-align:center;top:288.7px;font-size:11px;color:#000;">537</div>
<div class="a" style="left:645px;top:484px;width:64px;height:1px;background:#fff;"></div>
<div class="a" style="left:645px;top:484px;width:1px;height:19px;background:#fff;"></div>
<div class="a" style="left:645px;top:503px;width:64px;height:1px;background:#a0a0a0;"></div>
<div class="t" style="left:577px;width:200px;text-align:center;top:488.7px;font-size:11px;color:#000;">586</div>
<div class="a" style="left:1055px;top:264px;width:17px;height:346px;background:#f0f0f0;"></div>
<div class="a" style="left:1057px;top:301px;width:15px;height:17px;background:#cdcdcd;"></div>
<svg style="left:1061px;top:290px" width="8" height="7" viewBox="0 0 8 7"><path d="M0 3.9 L3.6 0.3 L7.2 3.9 L7.2 6.3 L3.6 2.7 L0 6.3 Z" fill="#606060"/></svg>
<svg style="left:1061px;top:599.1px" width="8" height="7" viewBox="0 0 8 7"><path d="M0 0 L3.6 3.6 L7.2 0 L7.2 2.4 L3.6 6 L0 2.4 Z" fill="#606060"/></svg>
<div class="a" style="left:645px;top:610px;width:427px;height:17px;background:#f0f0f0;"></div>
<div class="a" style="left:709px;top:610px;width:346px;height:16px;background:#f0f0f0;"></div>
<div class="a" style="left:727px;top:610px;width:179px;height:16px;background:#cdcdcd;"></div>
<svg style="left:714.8px;top:614.7px" width="7" height="8" viewBox="0 0 7 8"><path d="M6.2 0 L2.6 3.6 L6.2 7.2 L3.8 7.2 L0.2 3.6 L3.8 0 Z" fill="#606060"/></svg>
<svg style="left:1045px;top:614.7px" width="7" height="8" viewBox="0 0 7 8"><path d="M0 0 L3.6 3.6 L0 7.2 L2.4 7.2 L6 3.6 L2.4 0 Z" fill="#606060"/></svg>
<div class="a" style="left:0px;top:628px;width:922px;height:1px;background:#a0a0a0;"></div>
<div class="a" style="left:0px;top:629px;width:922px;height:15px;background:#f0f0f0;"></div>
<div class="a" style="left:922px;top:628px;width:2px;height:16px;background:#fff;"></div>
<div class="a" style="left:924px;top:628px;width:148px;height:1px;background:#a8a8a8;"></div>
<div class="a" style="left:924px;top:629px;width:1px;height:15px;background:#a8a8a8;"></div>
<div class="a" style="left:925px;top:629px;width:147px;height:15px;background:#e4e4e4;"></div>
<div class="a" style="left:1px;top:629px;width:1px;height:15px;background:#b8b8b8;"></div>
<div class="t" style="left:5px;top:634.4px;font-size:10.8px;color:#000;">Data has 270/270 Records, 7 + 0 Variables, and 27 Operating Points.</div>
</body></html>
